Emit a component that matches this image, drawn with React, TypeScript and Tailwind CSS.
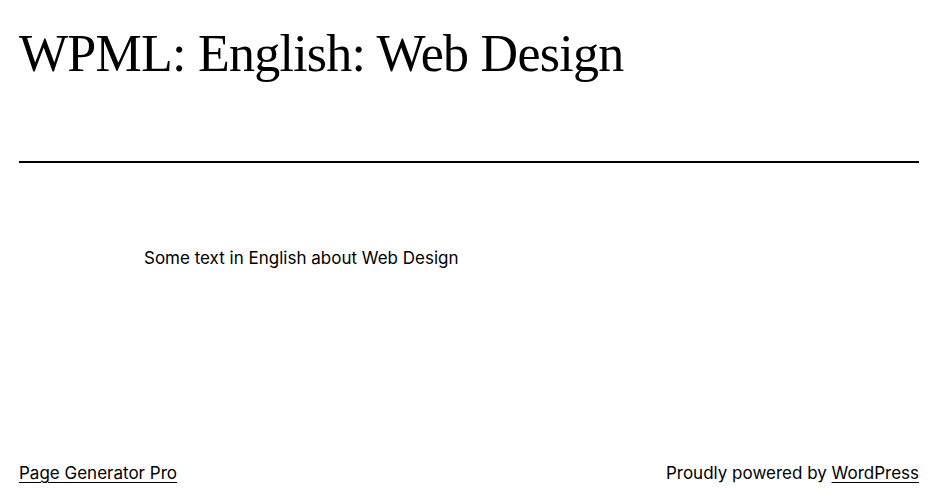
export default function App() {
  return (
    <div className="flex min-h-screen flex-col bg-white text-black">
      <header className="pl-[19px] pr-[21px] pt-[23px]">
        <h1 className="font-['Liberation_Serif',serif] text-[52px] leading-[1.2] font-normal tracking-[-0.75px]">
          WPML: English: Web Design
        </h1>
        <hr className="mt-[76px] border-0 border-t-2 border-black" />
      </header>

      <main className="mx-auto mt-[82px] w-[652px] font-['Inter',sans-serif] text-[17px] leading-[27px]">
        <p>Some text in English about Web Design</p>
      </main>

      <footer className="mt-auto flex items-center justify-between pl-[19px] pr-[21px] pb-[17px] font-['Inter',sans-serif] text-[17px] leading-[27px]">
        <a href="#" className="underline underline-offset-[3px]">
          Page Generator Pro
        </a>
        <p>
          Proudly powered by{" "}
          <a href="#" className="underline underline-offset-[3px]">
            WordPress
          </a>
        </p>
      </footer>
    </div>
  )
}
